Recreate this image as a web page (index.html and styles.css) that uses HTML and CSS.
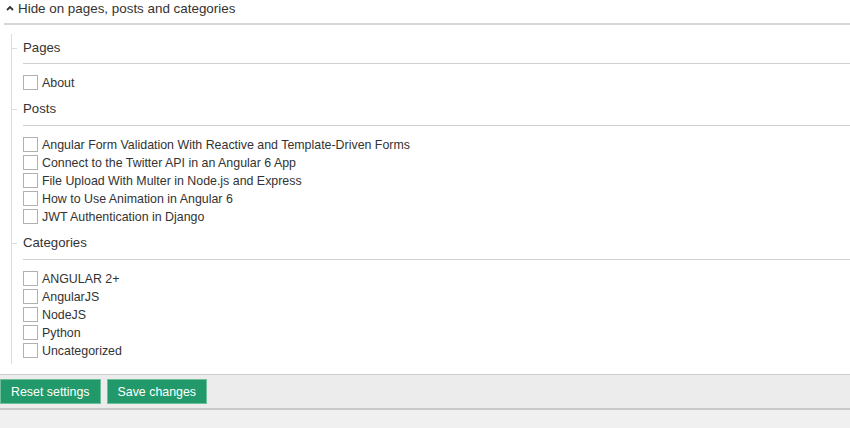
FILE: index.html
```html
<!DOCTYPE html>
<html>
<head>
<meta charset="utf-8">
<link rel="stylesheet" href="styles.css">
</head>
<body>
<div class="panel">
  <div class="toggle">
    <svg class="caret" width="8" height="6" viewBox="0 0 8 6"><path d="M1 5 L4 2 L7 5" fill="none" stroke="#333" stroke-width="1.8"/></svg>
    <span>Hide on pages, posts and categories</span>
  </div>
  <div class="tree">
    <div class="section">
      <div class="heading">Pages</div>
      <ul class="items">
        <li><span class="box"></span>About</li>
      </ul>
    </div>
    <div class="section">
      <div class="heading">Posts</div>
      <ul class="items">
        <li><span class="box"></span>Angular Form Validation With Reactive and Template-Driven Forms</li>
        <li><span class="box"></span>Connect to the Twitter API in an Angular 6 App</li>
        <li><span class="box"></span>File Upload With Multer in Node.js and Express</li>
        <li><span class="box"></span>How to Use Animation in Angular 6</li>
        <li><span class="box"></span>JWT Authentication in Django</li>
      </ul>
    </div>
    <div class="section">
      <div class="heading">Categories</div>
      <ul class="items">
        <li><span class="box"></span>ANGULAR 2+</li>
        <li><span class="box"></span>AngularJS</li>
        <li><span class="box"></span>NodeJS</li>
        <li><span class="box"></span>Python</li>
        <li><span class="box"></span>Uncategorized</li>
      </ul>
    </div>
  </div>
</div>
<div class="footer">
  <button class="btn">Reset settings</button>
  <button class="btn">Save changes</button>
</div>
</body>
</html>
```

FILE: styles.css
```css
html, body {
  margin: 0;
  padding: 0;
}
body {
  background: #f0f0f0;
  font-family: "Liberation Sans", Arial, sans-serif;
  color: #333;
  width: 850px;
  height: 428px;
  overflow: hidden;
}
.panel {
  background: #fff;
  padding-bottom: 10px;
}
.toggle {
  display: flex;
  align-items: center;
  gap: 4px;
  height: 23px;
  margin-left: 4px;
  padding-left: 2px;
  font-size: 13.4px;
  line-height: 16px;
  border-bottom: 2px solid #d6d6d6;
}
.toggle span {
  margin-top: -6px;
}
.caret {
  margin-top: -7px;
}
.tree {
  margin: 9px 0 0 11px;
  border-left: 1px solid #dcdcdc;
  padding: 4px 0 4px 11px;
}
.section {
  position: relative;
}
.heading {
  position: relative;
  font-size: 13.2px;
  line-height: 20px;
  padding-bottom: 5px;
  border-bottom: 1px solid #cfcfcf;
}
.section + .section .heading {
  margin-top: 7px;
  padding-bottom: 6px;
}
.heading::before {
  content: "";
  position: absolute;
  left: -12px;
  top: 10px;
  width: 6px;
  height: 1px;
  background: #dcdcdc;
}
.items {
  list-style: none;
  margin: 10px 0 0 0;
  padding: 0;
}
.items li {
  display: flex;
  align-items: center;
  height: 18px;
  font-size: 12.4px;
}
.box {
  width: 13px;
  height: 13px;
  border: 1px solid #b0b0b0;
  background: #fff;
  margin-right: 4px;
  margin-bottom: 2px;
  flex: none;
}
.footer {
  display: flex;
  gap: 6px;
  background: #ececec;
  border-top: 1px solid #cccccc;
  border-bottom: 2px solid #c8c8c8;
  padding: 4px 0;
}
.btn {
  font-family: "Liberation Sans", Arial, sans-serif;
  font-size: 12.4px;
  color: #fff;
  background: #21996a;
  border: 1px solid #6fbf9b;
  height: 25px;
  padding: 0 10px;
  margin: 0;
  line-height: 20px;
}
```
